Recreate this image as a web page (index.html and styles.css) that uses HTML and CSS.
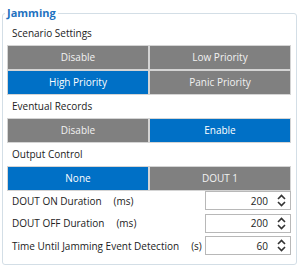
FILE: index.html
```html
<!DOCTYPE html>
<html lang="en">
<head>
    <meta charset="UTF-8">
    <meta name="viewport" content="width=device-width, initial-scale=1.0">
    <title>Jamming</title>
    <link rel="stylesheet" href="styles.css">
</head>
<body>
    <fieldset class="panel">
        <legend>Jamming</legend>

        <div class="label">Scenario Settings</div>
        <div class="choices">
            <div class="choice">Disable</div>
            <div class="choice">Low Priority</div>
            <div class="choice active">High Priority</div>
            <div class="choice">Panic Priority</div>
        </div>

        <div class="label">Eventual Records</div>
        <div class="choices">
            <div class="choice">Disable</div>
            <div class="choice active">Enable</div>
        </div>

        <div class="label">Output Control</div>
        <div class="choices">
            <div class="choice active">None</div>
            <div class="choice">DOUT 1</div>
        </div>

        <div class="fields">
            <div class="field">
                <span class="name">DOUT ON Duration<span class="unit">(ms)</span></span>
                <div class="spin">
                    <span class="value">200</span>
                    <svg class="arrows" width="9" height="13" viewBox="0 0 9 13">
                        <path d="M1 5 L4.5 1.5 L8 5 M1 8 L4.5 11.5 L8 8" fill="none" stroke="#333" stroke-width="1.6"/>
                    </svg>
                </div>
            </div>
            <div class="field">
                <span class="name">DOUT OFF Duration<span class="unit">(ms)</span></span>
                <div class="spin">
                    <span class="value">200</span>
                    <svg class="arrows" width="9" height="13" viewBox="0 0 9 13">
                        <path d="M1 5 L4.5 1.5 L8 5 M1 8 L4.5 11.5 L8 8" fill="none" stroke="#333" stroke-width="1.6"/>
                    </svg>
                </div>
            </div>
            <div class="field">
                <span class="name">Time Until Jamming Event Detection<span class="unit">(s)</span></span>
                <div class="spin">
                    <span class="value">60</span>
                    <svg class="arrows" width="9" height="13" viewBox="0 0 9 13">
                        <path d="M1 5 L4.5 1.5 L8 5 M1 8 L4.5 11.5 L8 8" fill="none" stroke="#333" stroke-width="1.6"/>
                    </svg>
                </div>
            </div>
        </div>
    </fieldset>
</body>
</html>
```

FILE: styles.css
```css
body {
    margin: 0;
    padding: 6px 0 0 2px;
    font-family: "Open Sans", Arial, sans-serif;
    font-size: 10px;
    color: #222;
    background-color: #fff;
}
.panel {
    width: 295px;
    box-sizing: border-box;
    margin: 0;
    padding: 2px 5px 9px 4px;
    border: 1px solid #d3dee6;
    border-radius: 3px;
}
.panel legend {
    margin-left: -2px;
    padding: 0 2px;
    font-size: 11px;
    font-weight: bold;
    line-height: 14px;
    color: #1f72c0;
}
.label {
    height: 23px;
    line-height: 23px;
    padding-left: 5px;
}
.choices {
    display: grid;
    grid-template-columns: 1fr 1fr;
    gap: 2px;
    padding: 1px;
    background-color: #d4d4d4;
}
.choice {
    height: 23px;
    line-height: 23px;
    text-align: center;
    background-color: #808080;
    color: #f2f2f2;
}
.choice.active {
    background-color: #0070c6;
    color: #fff;
}
.fields {
    display: flex;
    flex-direction: column;
    gap: 3.5px;
}
.field {
    display: flex;
    align-items: center;
    height: 19px;
    padding-left: 5px;
}
.name {
    flex: 1;
}
.unit {
    margin-left: 12px;
}
.spin {
    display: flex;
    align-items: center;
    justify-content: flex-end;
    width: 86px;
    height: 19px;
    box-sizing: border-box;
    border: 1px solid #b8b8b8;
    padding-right: 4px;
}
.value {
    margin-right: 9px;
}
```
